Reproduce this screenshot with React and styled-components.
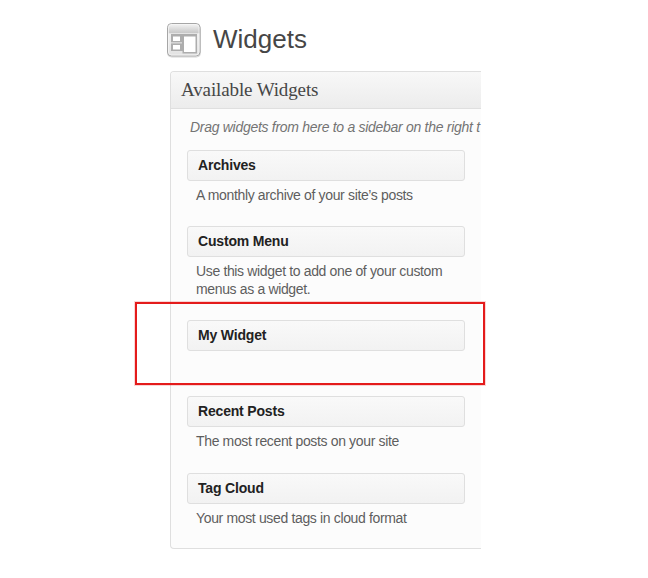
import React from 'react';
import styled, {createGlobalStyle} from 'styled-components';

const WIDGETS = [
  {name: 'Archives', description: 'A monthly archive of your site’s posts', height: 76},
  {
    name: 'Custom Menu',
    description: 'Use this widget to add one of your custom menus as a widget.',
    height: 94,
  },
  {name: 'My Widget', description: '', height: 76, highlighted: true},
  {name: 'Recent Posts', description: 'The most recent posts on your site', height: 77},
  {name: 'Tag Cloud', description: 'Your most used tags in cloud format', height: 75},
];

const WidgetsIcon = () => {
  return (
    <svg width="36" height="36" viewBox="0 0 36 36">
      <defs>
        <linearGradient id="frame" x1="0" y1="0" x2="0" y2="1">
          <stop offset="0" stopColor="#f6f6f6"/>
          <stop offset="0.2" stopColor="#d6d6d6"/>
          <stop offset="0.28" stopColor="#cacaca"/>
          <stop offset="0.32" stopColor="#f0f0f0"/>
          <stop offset="1" stopColor="#e2e2e2"/>
        </linearGradient>
      </defs>
      <rect x="1.5" y="2.5" width="33" height="32.5" rx="4" fill="none" stroke="#d4d4d4"/>
      <rect x="1.5" y="1.5" width="32.5" height="32.5" rx="4" fill="url(#frame)" stroke="#a6a6a6"/>
      <rect x="2.5" y="2.5" width="30.5" height="30.5" rx="3" fill="none" stroke="#f5f5f5" strokeOpacity="0.75"/>
      <path d="M5 12h26v19.5H16.5V29H5z" fill="#adadad"/>
      <path d="M5 20.8h11" stroke="#d6d6d6" strokeWidth="1.5"/>
      <rect x="7" y="14.5" width="7" height="4.5" fill="#fff"/>
      <rect x="7" y="23" width="7" height="4.5" fill="#fff"/>
      <rect x="18" y="14.5" width="11.5" height="15.5" fill="#fff"/>
    </svg>
  );
};

const Widget = ({name, description, height, highlighted}) => {
  return (
    <WidgetItem $height={height}>
      <WidgetTitle>{name}</WidgetTitle>
      {description && <WidgetDescription>{description}</WidgetDescription>}
      {highlighted && <Highlight/>}
    </WidgetItem>
  );
};

const App = () => {
  return (
    <Page>
      <GlobalStyle/>
      <PageHeader>
        <WidgetsIcon/>
        <PageTitle>Widgets</PageTitle>
      </PageHeader>
      <Panel>
        <PanelTitle>Available Widgets</PanelTitle>
        <Hint>Drag widgets from here to a sidebar on the right t</Hint>
        <WidgetList>
          {WIDGETS.map((widget) => (
            <Widget key={widget.name} {...widget}/>
          ))}
        </WidgetList>
      </Panel>
    </Page>
  );
};

const GlobalStyle = createGlobalStyle`
  *, *::before, *::after {
    box-sizing: border-box;
  }

  body {
    margin: 0;
    background: #fff;
    font-family: 'Liberation Sans', Arial, sans-serif;
  }

  h1, h2, h3, p, ul {
    margin: 0;
    padding: 0;
  }
`;

const Page = styled.main`
  width: 648px;
  height: 578px;
  padding: 22px 167px 0 166px;
  overflow: hidden;
`;

const PageHeader = styled.header`
  display: flex;
  height: 49px;
`;

const PageTitle = styled.h1`
  margin-left: 11px;
  font-size: 26px;
  font-weight: 400;
  line-height: 35px;
  color: #464646;
`;

const Panel = styled.section`
  width: 311px;
  height: 478px;
  margin-left: 4px;
  border: 1px solid #dfdfdf;
  border-right: none;
  border-radius: 4px 0 0 4px;
  background: #fcfcfc;
`;

const PanelTitle = styled.h2`
  height: 37px;
  padding-left: 10px;
  border-bottom: 1px solid #dfdfdf;
  border-radius: 3px 0 0 0;
  background: linear-gradient(#f8f8f8, #ececec);
  font-family: 'Liberation Serif', Georgia, serif;
  font-size: 19px;
  font-weight: 400;
  line-height: 36px;
  letter-spacing: -0.12px;
  color: #464646;
`;

const Hint = styled.p`
  height: 41px;
  padding: 9px 0 0 19px;
  font-size: 14px;
  font-style: italic;
  line-height: 18px;
  letter-spacing: -0.29px;
  white-space: nowrap;
  color: #747474;
`;

const WidgetList = styled.ul`
  padding-left: 16px;
  list-style: none;
`;

const WidgetItem = styled.li`
  position: relative;
  width: 278px;
  height: ${({$height}) => $height}px;
`;

const WidgetTitle = styled.h3`
  height: 31px;
  padding-left: 10px;
  border: 1px solid #dfdfdf;
  border-radius: 3px;
  background: linear-gradient(#f9f9f9, #f2f2f2);
  font-size: 14px;
  line-height: 29px;
  letter-spacing: -0.18px;
  color: #222;
`;

const WidgetDescription = styled.p`
  padding: 5px 5px 0 9px;
  font-size: 14px;
  line-height: 18px;
  letter-spacing: -0.35px;
  color: #5e5e5e;
`;

const Highlight = styled.div`
  position: absolute;
  top: -18px;
  left: -52px;
  width: 350px;
  height: 83px;
  border: 2px solid #e41b1b;
  box-shadow: 0 0 0 1px rgba(228, 27, 27, 0.18);
`;

export default App;
